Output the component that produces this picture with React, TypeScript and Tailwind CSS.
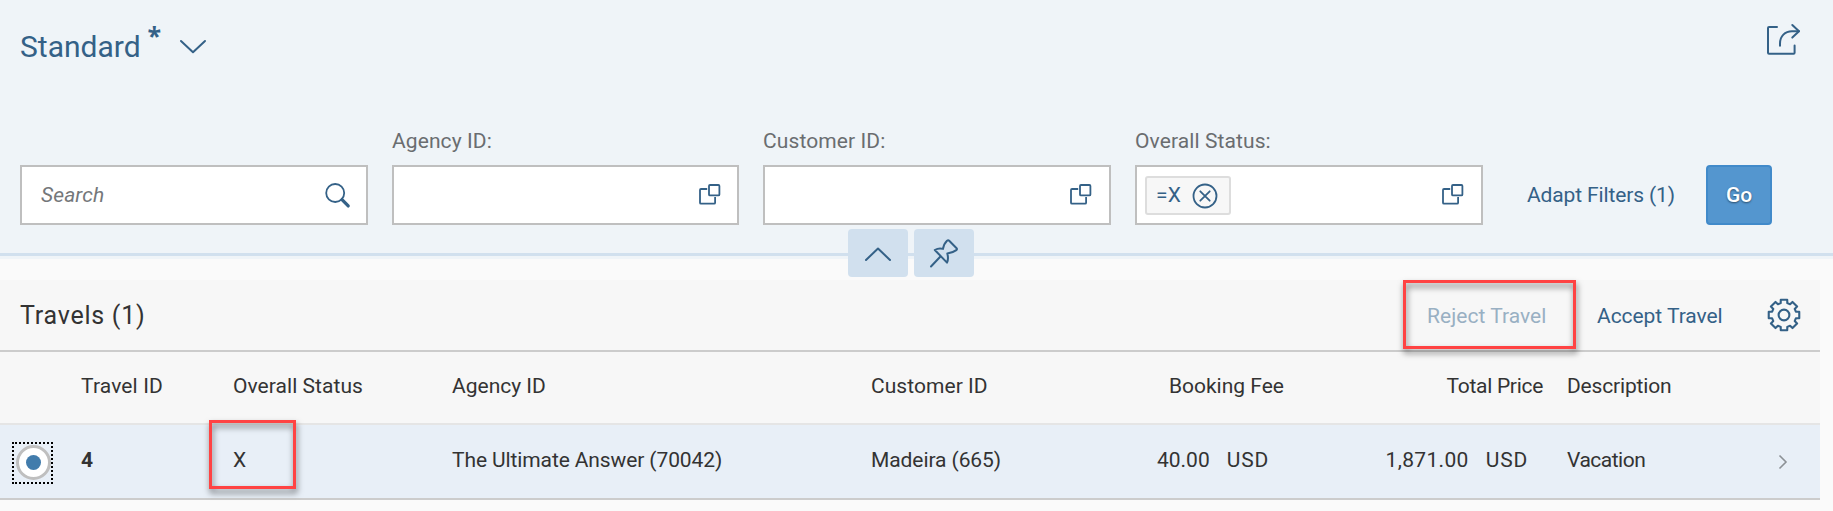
import React from "react";

const GEAR_PATH = (() => {
  const points: string[] = [];
  const corners: [number, number][] = [
    [12.3, -15.5],
    [15.6, -12],
    [15.6, 12],
    [12.3, 15.5],
  ];
  for (let tooth = 0; tooth < 8; tooth++) {
    for (const [radius, offset] of corners) {
      const angle = ((tooth * 45 + offset - 90) * Math.PI) / 180;
      points.push(
        `${(18 + radius * Math.cos(angle)).toFixed(2)} ${(18 + radius * Math.sin(angle)).toFixed(2)}`,
      );
    }
  }
  return `M${points.join("L")}Z`;
})();

function GearIcon() {
  return (
    <svg className="h-9 w-9" viewBox="0 0 36 36" fill="none" stroke="#346187" strokeWidth="2.1" strokeLinejoin="round">
      <path d={GEAR_PATH} />
      <circle cx="18" cy="18" r="5.4" />
    </svg>
  );
}

function ShareIcon() {
  return (
    <svg className="h-9 w-9" viewBox="0 0 36 36" fill="none" stroke="#346187" strokeWidth="2" strokeLinecap="round" strokeLinejoin="round">
      <path d="M11 5H3a1 1 0 0 0-1 1V30.8a1 1 0 0 0 1 1H27.6a1 1 0 0 0 1-1V23.5" />
      <path d="M14 23.8V21.5C14 14 19 9.3 26 9.3H33" />
      <path d="M26.3 3L33 9.3L26.3 15.6" />
    </svg>
  );
}

function ValueHelpIcon() {
  return (
    <svg className="h-6 w-6 shrink-0" viewBox="0 0 24 24" fill="none" stroke="#346187" strokeWidth="1.8" strokeLinejoin="round">
      <path d="M9.2 6H3a1 1 0 0 0-1 1V19.7a1 1 0 0 0 1 1H16.1a1 1 0 0 0 1-1V14" />
      <rect x="11" y="2" width="10.4" height="10.4" rx="1" />
    </svg>
  );
}

function SearchIcon() {
  return (
    <svg className="h-[26px] w-[26px] shrink-0" viewBox="0 0 26 26" fill="none" stroke="#346187">
      <circle cx="10.2" cy="10" r="9" strokeWidth="1.8" />
      <path d="M17 16.6L23.2 22.9" strokeWidth="3.3" strokeLinecap="round" />
    </svg>
  );
}

function PinIcon() {
  return (
    <svg className="h-[30px] w-[30px]" viewBox="0 0 30 30" fill="none" stroke="#346187" strokeWidth="2" strokeLinecap="round" strokeLinejoin="round">
      <path d="M2 28.5L11.2 18.8" />
      <path d="M5.8 12C8.5 10.4 11.5 10.2 14 10.9C14.6 7.6 16 4.5 18 2.7C18.8 2.1 19.6 2.2 20.2 2.8L27.6 10.2C28.2 10.9 28 11.6 27.3 12.1C25 13.8 22 15 18.3 15.5C19.2 18.6 19.2 21.9 18 24.6Z" />
    </svg>
  );
}

function Field({ label, width, children }: { label?: string; width: string; children?: React.ReactNode }) {
  return (
    <div className={`flex shrink-0 flex-col ${width}`}>
      <div className="mb-[9px] h-[30px] whitespace-nowrap leading-[30px] tracking-[0.1px] text-[#6a6d70]">{label}</div>
      <div className="flex h-[60px] items-center border-2 border-[#bfbfbf] bg-white">{children}</div>
    </div>
  );
}

const columns =
  "grid grid-cols-[81px_151px_220px_419px_229px_184px_259px_24px_1fr] items-center whitespace-nowrap";

export default function App() {
  return (
    <div className="relative h-[511px] w-[1833px] overflow-hidden bg-[#fafafa] font-[Roboto,sans-serif] text-[21px] text-[#333]">
      <header className="h-[259px] bg-[#eff4f8]">
        <div className="flex h-[94px] items-center justify-between pl-5 pr-[31px] text-[#346187]">
          <div className="-mt-[2px] flex items-center">
            <h1 className="text-[30px]">Standard</h1>
            <span className="-mt-[24px] ml-[7px] h-8 w-[14px] font-['Open_Sans',sans-serif] text-[25px] font-bold leading-[35px]">*</span>
            <svg className="ml-[17px] mt-px h-4 w-7" viewBox="0 0 28 16" fill="none" stroke="#346187" strokeWidth="2" strokeLinecap="round" strokeLinejoin="round">
              <path d="M2 2L14 13.3L26 2" />
            </svg>
          </div>
          <div className="-mt-[14px]">
            <ShareIcon />
          </div>
        </div>

        <div className="flex h-[131px] items-end gap-6 pl-5">
          <Field width="w-[348px]">
            <span className="flex-1 pl-[19px] pt-[2px] italic tracking-[0.13px] text-[#74777a]">Search</span>
            <span className="mr-[15px] mt-px">
              <SearchIcon />
            </span>
          </Field>
          <Field label="Agency ID:" width="w-[347px]">
            <span className="ml-auto mr-[15px]">
              <ValueHelpIcon />
            </span>
          </Field>
          <Field label="Customer ID:" width="w-[348px]">
            <span className="ml-auto mr-[16px]">
              <ValueHelpIcon />
            </span>
          </Field>
          <Field label="Overall Status:" width="w-[348px]">
            <div className="ml-2 flex h-[39px] w-[86px] items-center rounded-[3px] border-2 border-[#ddd] bg-[#f7f7f7] pl-[9px] text-[#346187]">
              <span className="pt-px tracking-[0.2px]">=X</span>
              <svg className="ml-[11px] mt-px h-[26px] w-[26px] shrink-0" viewBox="0 0 26 26" fill="none" stroke="#346187" strokeWidth="1.8" strokeLinecap="round">
                <circle cx="13" cy="13" r="11.5" />
                <path d="M8.3 8.3L17.7 17.7M17.7 8.3L8.3 17.7" />
              </svg>
            </div>
            <span className="ml-auto mr-[16px]">
              <ValueHelpIcon />
            </span>
          </Field>
          <div className="flex h-[60px] items-center pl-5 text-[#346187]">
            <button className="w-[147px] whitespace-nowrap pt-[2px] text-left tracking-[-0.13px]">Adapt Filters (1)</button>
            <button className="ml-8 h-[60px] w-[66px] rounded-[4px] border-2 border-[#418aca] bg-[#5496cf] pt-px text-center font-medium text-white [text-shadow:0_1px_2px_rgba(0,0,0,0.5)]">
              Go
            </button>
          </div>
        </div>

        <div className="flex h-[56px] items-center justify-center gap-[6px] bg-[linear-gradient(to_bottom,transparent_28px,#d1e0ee_28px,#d1e0ee_31px,transparent_31px)] pr-[11px]">
          <button className="flex h-12 w-[60px] items-center justify-center rounded-[4px] bg-[#d1e0ee]">
            <svg className="mt-[2px] h-4 w-7" viewBox="0 0 28 16" fill="none" stroke="#346187" strokeWidth="2" strokeLinecap="round" strokeLinejoin="round">
              <path d="M2 14L14 2.5L26 14" />
            </svg>
          </button>
          <button className="flex h-12 w-[60px] items-center justify-center rounded-[4px] bg-[#d1e0ee]">
            <PinIcon />
          </button>
        </div>
      </header>

      <main className="mt-[21px] w-[1820px] bg-[#f7f7f7]">
        <div className="flex h-[72px] items-center border-b-2 border-[#ccc] pl-[20px] pr-[18px] text-[#346187]">
          <h2 className="flex-1 pt-px text-[25px] tracking-[0.76px] text-[#333]">Travels (1)</h2>
          <button className="mr-[50px] w-[120px] whitespace-nowrap pt-[3px] text-left tracking-[0.04px] text-[#99b0c3]">Reject Travel</button>
          <button className="mr-[44px] w-[125px] whitespace-nowrap pt-[3px] text-left tracking-[-0.05px]">Accept Travel</button>
          <GearIcon />
        </div>

        <div className={`${columns} h-[73px] border-b-2 border-[#e5e5e5] pb-[2px]`}>
          <span />
          <span className="tracking-[0.13px]">Travel ID</span>
          <span className="pl-px tracking-[0.05px]">Overall Status</span>
          <span>Agency ID</span>
          <span className="tracking-[0.05px]">Customer ID</span>
          <span className="text-right">Booking Fee</span>
          <span className="text-right tracking-[-0.3px]">Total Price</span>
          <span />
          <span className="tracking-[-0.17px]">Description</span>
        </div>

        <div className={`${columns} h-[75px] border-b-2 border-[#ccc] bg-[#e8eff7]`}>
          <span className="ml-3 mt-[3px] flex h-[42px] w-[41px] items-center justify-center border-2 border-dotted border-black">
            <span className="-mt-px ml-px flex h-[35px] w-[35px] shrink-0 items-center justify-center rounded-full border-[3px] border-[#bfbfbf] bg-white">
              <span className="h-[15px] w-[15px] rounded-full bg-[#427cac]" />
            </span>
          </span>
          <span className="pb-px font-bold">4</span>
          <span className="pb-px pl-px">X</span>
          <span className="pb-px tracking-[-0.11px]">The Ultimate Answer (70042)</span>
          <span className="pb-px tracking-[-0.08px]">Madeira (665)</span>
          <span className="flex justify-end gap-[17px] pb-px pr-[15px]">
            <span>40.00</span>
            <span className="tracking-[0.8px]">USD</span>
          </span>
          <span className="flex justify-end gap-[17px] pb-px pr-[15px]">
            <span className="tracking-[0.33px]">1,871.00</span>
            <span className="tracking-[0.8px]">USD</span>
          </span>
          <span />
          <span className="flex items-center justify-between pr-[32px]">
            <span className="pb-px tracking-[-0.5px]">Vacation</span>
            <svg className="mt-px h-4 w-[10px]" viewBox="0 0 10 16" fill="none" stroke="#8c9196" strokeWidth="1.6">
              <path d="M1.5 1.5L8 8L1.5 14.5" />
            </svg>
          </span>
        </div>
      </main>

      <div className="pointer-events-none absolute left-[1403px] top-[280px] h-[69px] w-[173px] border-[3px] border-[#ff4343] drop-shadow-[1px_4px_3px_rgba(0,0,0,0.55)]" />
      <div className="pointer-events-none absolute left-[209px] top-[420px] h-[69px] w-[87px] border-[3px] border-[#ff4343] drop-shadow-[1px_4px_3px_rgba(0,0,0,0.55)]" />
    </div>
  );
}
